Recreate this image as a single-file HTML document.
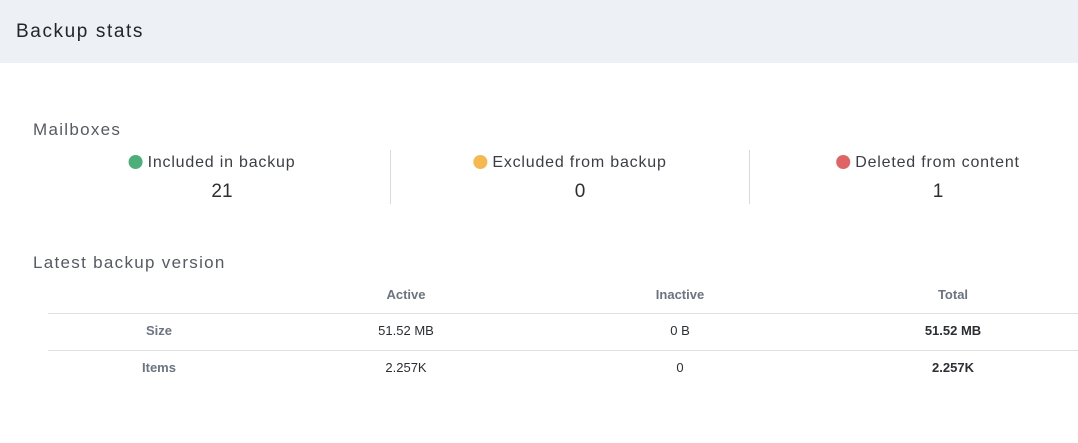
<html><head><style>
body{margin:0;width:1078px;height:443px;background:#fff;font-family:"Liberation Sans",sans-serif;position:relative;overflow:hidden}
.a{position:absolute;white-space:nowrap}
.c{transform:translateX(-50%)}
.dot{display:inline-block;width:14px;height:14px;border-radius:50%;vertical-align:-2px;margin-right:5px}
.lab{font-size:16px;letter-spacing:.8px;color:#3a3f45}
.num{font-size:19px;color:#2b2f33}
.th{font-size:13px;color:#6b7480;font-weight:bold}
.td{font-size:13px;color:#2b2f33}
.h{font-size:17px;letter-spacing:1.3px;color:#555b61}
</style></head><body>
<div class="a" style="left:0;top:0;width:1078px;height:63px;background:#edf0f5"></div>
<div class="a" style="left:16px;top:21px;font-size:19px;letter-spacing:1.6px;color:#22262a">Backup stats</div>
<div class="a h" style="left:33px;top:120px">Mailboxes</div>
<div class="a" style="left:390px;top:150px;width:1px;height:54px;background:#d6d9dd"></div>
<div class="a" style="left:749px;top:150px;width:1px;height:54px;background:#d6d9dd"></div>
<div class="a c lab" style="left:212px;top:154px"><span class="dot" style="background:#4caf79"></span>Included in backup</div>
<div class="a c lab" style="left:570px;top:154px"><span class="dot" style="background:#f5b94f"></span>Excluded from backup</div>
<div class="a c lab" style="left:928px;top:154px"><span class="dot" style="background:#e06464"></span>Deleted from content</div>
<div class="a c num" style="left:222px;top:181px">21</div>
<div class="a c num" style="left:580px;top:181px">0</div>
<div class="a c num" style="left:938px;top:181px">1</div>
<div class="a h" style="left:33px;top:253px">Latest backup version</div>
<div class="a c th" style="left:406px;top:287px">Active</div>
<div class="a c th" style="left:680px;top:287px">Inactive</div>
<div class="a c th" style="left:953px;top:287px">Total</div>
<div class="a" style="left:48px;top:313px;width:1030px;height:1px;background:#dcdfe3"></div>
<div class="a" style="left:48px;top:350px;width:1030px;height:1px;background:#dcdfe3"></div>
<div class="a c th" style="left:159px;top:323px">Size</div>
<div class="a c td" style="left:406px;top:323px">51.52 MB</div>
<div class="a c td" style="left:680px;top:323px">0 B</div>
<div class="a c td" style="left:953px;top:323px;font-weight:bold">51.52 MB</div>
<div class="a c th" style="left:159px;top:360px">Items</div>
<div class="a c td" style="left:406px;top:360px">2.257K</div>
<div class="a c td" style="left:680px;top:360px">0</div>
<div class="a c td" style="left:953px;top:360px;font-weight:bold">2.257K</div>
</body></html>
